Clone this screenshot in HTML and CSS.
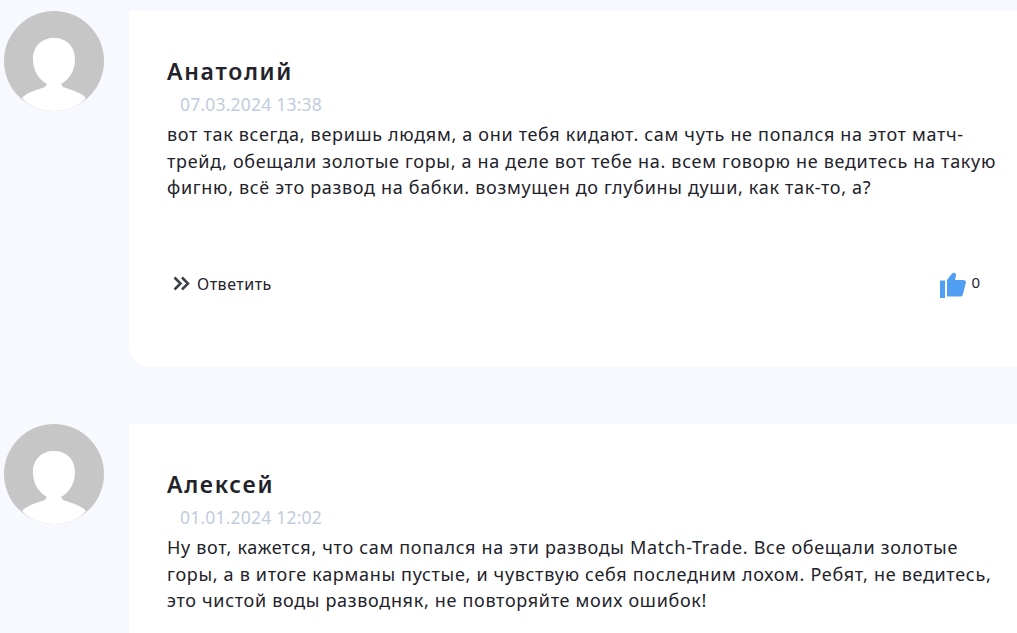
FILE: index.html
```html
<!DOCTYPE html>
<html lang="ru">
<head>
  <meta charset="UTF-8">
  <title>Отзывы</title>
  <link rel="stylesheet" href="styles.css">
</head>
<body>
  <div class="comment">
    <svg class="avatar" viewBox="0 0 100 100">
      <circle cx="50" cy="50" r="50" fill="#c6c6c6"/>
      <path d="M18 87 C23 81 33 79 41 76 L43 73 C34 68 29 59 29 48 C29 35 38 27 50 27 C62 27 71 35 71 48 C71 59 66 68 57 73 L59 76 C67 79 77 81 82 87 C74 96 62 100 50 100 C38 100 26 96 18 87Z" fill="#fff"/>
    </svg>
    <div class="card">
      <div class="name">Анатолий</div>
      <div class="date">07.03.2024 13:38</div>
      <p class="text">вот так всегда, веришь людям, а они тебя кидают. сам чуть не попался на этот матч-трейд, обещали золотые горы, а на деле вот тебе на. всем говорю не ведитесь на такую фигню, всё это развод на бабки. возмущен до глубины души, как так-то, а?</p>
      <div class="actions">
        <a class="reply">
          <svg class="chevrons" viewBox="0 0 17 15"><path d="M1.500 1.500 L7.500 7.500 L1.500 13.500 M9 1.500 L15 7.500 L9 13.500" fill="none" stroke="#3c3f46" stroke-width="2.5"/></svg>
          Ответить
        </a>
        <div class="likes">
          <svg class="thumb" viewBox="0 0 26 26"><path d="M0 8.500 H5 V26 H0Z M7 8 L12 1.500 C14 0 16 1 16 3.500 L15 8 H23 C26 8 26.500 10 25.500 12 L23 22 C22.500 24 21.500 24.500 20 24.500 H7Z" fill="#4f9ef2"/></svg>
          <span class="count">0</span>
        </div>
      </div>
    </div>
  </div>
  <div class="comment">
    <svg class="avatar" viewBox="0 0 100 100">
      <circle cx="50" cy="50" r="50" fill="#c6c6c6"/>
      <path d="M18 87 C23 81 33 79 41 76 L43 73 C34 68 29 59 29 48 C29 35 38 27 50 27 C62 27 71 35 71 48 C71 59 66 68 57 73 L59 76 C67 79 77 81 82 87 C74 96 62 100 50 100 C38 100 26 96 18 87Z" fill="#fff"/>
    </svg>
    <div class="card">
      <div class="name">Алексей</div>
      <div class="date">01.01.2024 12:02</div>
      <p class="text">Ну вот, кажется, что сам попался на эти разводы Match-Trade. Все обещали золотые горы, а в итоге карманы пустые, и чувствую себя последним лохом. Ребят, не ведитесь, это чистой воды разводняк, не повторяйте моих ошибок!</p>
    </div>
  </div>
</body>
</html>
```

FILE: styles.css
```css
html, body {
  height: 100%;
}
body {
  margin: 0;
  padding: 11px 0 0 4px;
  box-sizing: border-box;
  overflow: hidden;
  background: #f8f9ff;
  font-family: "Noto Sans", sans-serif;
  color: #22222a;
}
.comment {
  display: flex;
  align-items: flex-start;
  gap: 25px;
  margin-bottom: 57px;
}
.avatar {
  width: 100px;
  height: 100px;
  flex: none;
}
.card {
  flex: 1;
  min-height: 356px;
  box-sizing: border-box;
  padding: 44px 16px 0 38px;
  background: #fff;
  border-bottom-left-radius: 20px;
}
.name {
  font-size: 23px;
  font-weight: 600;
  line-height: 32px;
  letter-spacing: 1.7px;
}
.date {
  margin: 5px 0 0 13px;
  font-size: 17.500px;
  line-height: 24px;
  letter-spacing: 0.2px;
  color: #c1cce0;
}
.text {
  margin: 5px 0 0;
  font-size: 18px;
  line-height: 26.500px;
  letter-spacing: 0.68px;
}
.actions {
  display: flex;
  justify-content: space-between;
  align-items: flex-start;
  margin-top: 71px;
  padding: 0 21px 0 6px;
}
.reply {
  display: flex;
  align-items: center;
  gap: 7px;
  font-size: 16px;
  line-height: 24px;
  letter-spacing: 0.5px;
}
.chevrons {
  width: 17px;
  height: 15px;
}
.likes {
  display: flex;
  align-items: flex-start;
  gap: 5px;
}
.thumb {
  width: 26px;
  height: 26px;
}
.count {
  font-size: 15px;
  line-height: 20px;
}
```
